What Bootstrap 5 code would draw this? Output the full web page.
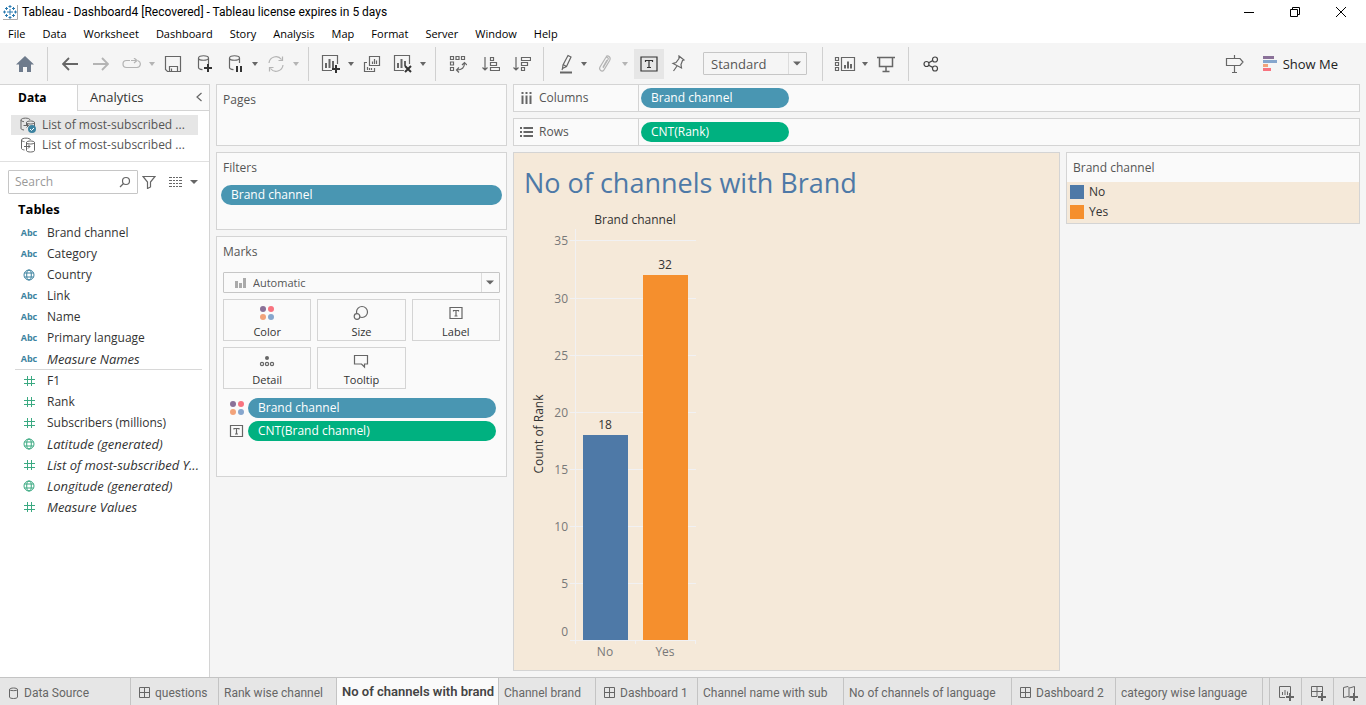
<!DOCTYPE html>
<html lang="en">
<head>
<meta charset="utf-8">
<meta name="viewport" content="width=device-width, initial-scale=1">
<title>Tableau - Dashboard4</title>
<link href="https://cdn.jsdelivr.net/npm/bootstrap@5.3.0/dist/css/bootstrap.min.css" rel="stylesheet">
<style>
:root{--line:#d4d4d4;--ink:#333;--soft:#555;--blue:#4996b2;--green:#00b180;--panel:#fafafa;--sand:#f5e9d9}
body{font-family:"Open Sans","Noto Sans",sans-serif;font-size:12px;line-height:20px;color:var(--ink);background:#f5f5f5}
button{font:inherit;color:inherit;background:none;border:0;padding:0}
svg{display:block;fill:none;stroke:#666;stroke-width:1.2;flex:none}
a{color:inherit;text-decoration:none}
.titlebar{height:24px;background:#fff;color:#000;font-family:Roboto,sans-serif;padding-left:2px;padding-right:2px}
.titlebar .winbtn svg{stroke:#000;stroke-width:1}
.titlebar .logo{stroke:#2a7ab0;stroke-width:1}
.winbtn{width:46px;height:24px;display:flex;align-items:center;justify-content:center}
.menubar{height:19px;background:#fff;color:#000;font-size:11px;padding-left:8px;gap:17px}
.menubar a{line-height:19px}
.toolbar{height:41px;padding-left:9px}
.tool{width:31px;height:30px;display:flex;align-items:center;justify-content:center;flex:none}
.tool-slim{width:27px}
.tool-on{width:30px;background:#e6e6e6}
.tool-guide{margin-left:auto;margin-right:12px}
.show-me{font-size:13px;color:#222}
.drop{width:10px;height:30px;display:flex;align-items:center;justify-content:center;flex:none}
.drop::after,.caret::after{content:"";border:3px solid transparent;border-top:4px solid #666;border-bottom:0}
.caret::after{border-width:4px 4px 0}
.off{opacity:.45}
.split{width:1px;height:34px;background:#d0d0d0;margin:0 6px 0 7px;flex:none}
.picker{appearance:none;border:1px solid #c6c6c6;border-radius:1px;color:var(--soft);outline-offset:1px;
 background:url("data:image/svg+xml,%3Csvg xmlns='http://www.w3.org/2000/svg' width='18' height='24'%3E%3Cpath d='M.5 0V24' stroke='%23dcdcdc'/%3E%3Cpath d='M5 10h8l-4 4z' fill='%23666'/%3E%3C/svg%3E") right center no-repeat}
.picker-fit{width:104px;height:23px;font-size:13px;line-height:20px;padding:0 7px;margin-left:12px;margin-right:8px}
.sidepane{width:210px;background:#fff;border-right:1px solid var(--line);border-top:1px solid var(--line);flex:none}
.side-tab{height:26px;font-size:13px;color:var(--ink)}
.side-tab.active{width:77px;padding-left:18px;text-align:left;font-weight:700;font-size:12px;color:#000}
.side-tab.other{padding:0 6px 2px 12px;background:var(--panel);border-left:1px solid var(--line);border-bottom:1px solid var(--line)}
.sources{padding:4px 11px 6px;border-bottom:1px solid #e0e0e0}
.source{height:20px;width:100%;padding-left:9px;gap:6px;color:var(--soft);white-space:nowrap}
.source.active{background:#e6e6e6}
.finder{padding:8px 12px 0 8px}
.finder-box{width:130px;height:24px;border:1px solid #c6c6c6;border-radius:1px;padding:0 6px}
.finder-box input{border:0;outline:0;min-width:0;padding:0;color:var(--ink);font-size:12px}
.finder-box input::placeholder{color:#999;opacity:1}
.finder-split{width:1px;height:18px;background:#d4d4d4;margin:0 4px 0 5px}
.side-title{font-size:13px;font-weight:700;color:#000;margin:5px 0 3px 18px;line-height:20px}
.fields{margin:0;padding:0 7px 0 15px;list-style:none}
.field{height:21px;display:flex;align-items:center;white-space:nowrap;width:100%}
.field .kind{width:28px;height:12px;margin-right:4px;display:flex;align-items:center;justify-content:center;font-size:9px;line-height:12px;font-weight:700;color:#3d83a0}
.fields svg{stroke:#3d83a0;stroke-width:1}
.measures{border-top:1px solid #d8d8d8;padding:0;margin:0 7px 0 15px}
.measures svg{stroke:#3aa981}
.calc{font-style:italic;font-size:13px}
.work{padding:0 6px 6px;gap:6px;min-width:0}
.shelves{width:291px;gap:6px;flex:none}
.stage{gap:6px;min-width:0}
.panel{background:var(--panel);border:1px solid var(--line)}
.panel-title{font-size:12px;line-height:20px;font-weight:400;margin:5px 6px 0;color:var(--soft)}
.pages{height:62px}.filters{height:78px}.marks{height:241px}
.pill{height:20px;border-radius:10px;padding:0 10px;text-align:left;color:#fff;font-weight:500;background:var(--blue);line-height:20px}
.pill-measure{background:var(--green)}
.pill-fixed{width:148px;margin:3px 2px}
.filters .pill{width:281px;margin:7px 4px}
.mark-type{width:100%;height:21px;font-size:11px;padding:0 29px}
.mark-wrap{margin:10px 6px 6px;position:relative}
.mark-wrap svg{position:absolute;left:12px;top:5px;stroke:none;fill:#aaa}
.mark-grid{display:grid;grid-template-columns:repeat(3,1fr);gap:6px;margin:0 6px}
.mark-btn{height:42px;border:1px solid var(--line);font-size:11px;line-height:16px;padding-top:5px;display:flex;flex-direction:column;align-items:center;gap:3px}
.encodings{margin:9px 10px 0 12px;gap:3px}
.encoding{gap:3px}
.shelf{height:28px}
.shelf-label{width:125px;padding-left:6px;gap:6px;border-right:1px solid var(--line);color:var(--soft)}
.view{background:var(--sand);border:1px solid var(--line);min-width:0}
.view h1{font-size:27px;line-height:36px;font-weight:400;color:#4e79a7;margin:12px 10px 0}
.view svg{stroke:none}
.view svg text{fill:#333;text-anchor:middle;font-size:12px}
.view svg .tick{fill:#787878}
.view svg .ends{text-anchor:end}
.view svg .head{font-weight:500}
.legend{width:294px;flex:none}
.legend ul{background:var(--sand);margin:0;padding:0 3px 1px;list-style:none}
.legend li{display:flex;align-items:center;gap:5px}
.swatch{width:14px;height:14px}
.swatch-no{background:#4e79a7}
.swatch-yes{background:#f58f2d}
.sheets{height:28px;border-top:1px solid #c4c4c4;background:#e6e6e6;color:#666;font-family:Roboto,sans-serif;
 display:grid;grid-template-columns:131px 88px 118px 162px 97px 102px 146px 168px 104px 147px minmax(6px,1fr) 32px 32px 32px}
.sheet{border-right:1px solid #c4c4c4;padding:2px 0 0 5px;display:flex;align-items:center;gap:5px;white-space:nowrap;overflow:hidden}
.sheet.active{background:var(--panel);font-size:13px;font-weight:600;color:#444;padding-top:0}
.sheet svg{stroke-width:1}
.sheet.iconic{padding-left:8px}
.sheet.adder{padding-left:7px}
</style>
</head>
<body>
<div class="d-flex flex-column min-vh-100">
<header>
 <div class="titlebar d-flex align-items-center">
  <svg class="logo" width="16" height="16"><path d="M8 5v6M5 8h6M8 1v3M6.500 2.500h3M8 12v3M6.500 13.500h3M1 8h3M2.500 6.500v3M12 8h3M13.500 6.500v3M4.500 3v3M3 4.500h3M11.500 3v3M10 4.500h3M4.500 10v3M3 11.500h3M11.500 10v3M10 11.500h3"/><path d="M15.500 1v14.500H1" stroke="#aaa"/></svg>
  <span class="ms-1">Tableau - Dashboard4 [Recovered] - Tableau license expires in 5 days</span>
  <div class="ms-auto d-flex">
   <button class="winbtn" aria-label="Minimize"><svg width="12" height="12"><path d="M1 6.500h10"/></svg></button>
   <button class="winbtn" aria-label="Restore"><svg width="12" height="12"><path d="M1.500 3.500h7v7h-7zM3.500 3V1.500h7v7H9"/></svg></button>
   <button class="winbtn" aria-label="Close"><svg width="12" height="12"><path d="M1 1l10 10M11 1L1 11"/></svg></button>
  </div>
 </div>
 <nav class="menubar d-flex"><a href="#">File</a><a href="#">Data</a><a href="#">Worksheet</a><a href="#">Dashboard</a><a href="#">Story</a><a href="#">Analysis</a><a href="#">Map</a><a href="#">Format</a><a href="#">Server</a><a href="#">Window</a><a href="#">Help</a></nav>
 <div class="toolbar d-flex align-items-center" role="toolbar" aria-label="Main">
  <button class="tool" aria-label="Start page"><svg width="18" height="16"><path d="M9 0l9 8.500h-3V16h-4v-5H7v5H3V8.500H0z" fill="#6e7b8c" stroke="none"/></svg></button>
  <span class="split"></span>
  <button class="tool" aria-label="Undo"><svg width="16" height="14"><path d="M16 7H1M7 1L1 7l6 6" stroke-width="1.800"/></svg></button>
  <button class="tool off" aria-label="Redo"><svg width="16" height="14"><path d="M0 7h15M9 1l6 6-6 6" stroke-width="1.800"/></svg></button>
  <button class="tool off" aria-label="Replay"><svg width="20" height="12"><path d="M8 2.500H4.500a3.500 3.500 0 000 7H15a3.500 3.500 0 001-6.800M9 2.500h5M12 0l3 2.500L12 5"/></svg></button><button class="drop off" aria-label="Replay options"></button>
  <button class="tool" aria-label="Save"><svg width="18" height="18"><path d="M1.500 1.500h15v15h-13l-2-2zM5.500 16v-4.500h8V16M7.500 13.500v3"/></svg></button>
  <button class="tool" aria-label="New data source"><svg width="18" height="20"><path d="M3.500 4c0-3 10-3 10 0s-10 3-10 0v9.500c0 1.500 2 2 4 2.200M13.500 4v6"/><path d="M13 10v8M9 14h8" stroke="#333" stroke-width="2"/></svg></button>
  <button class="tool" aria-label="Pause updates"><svg width="18" height="20"><path d="M3.500 4c0-3 10-3 10 0s-10 3-10 0v9.500c0 1.500 2 2 4 2.200M13.500 4v5"/><path d="M11 12v6M15 12v6" stroke="#333" stroke-width="2"/></svg></button><button class="drop" aria-label="Update options"></button>
  <button class="tool off" aria-label="Refresh"><svg width="18" height="18"><path d="M2 8a7 7 0 0112.500-3.500M16 10A7 7 0 013.500 13.500M11.500 5.500h4v-4M6.500 12.500h-4v4"/></svg></button><button class="drop off" aria-label="Refresh options"></button>
  <span class="split"></span>
  <button class="tool" aria-label="New worksheet"><svg width="20" height="20"><path d="M11 16.500H1.500v-15h15V10"/><path d="M5 14V9M8.500 14V5M12 14V7" stroke-width="2"/><path d="M15 11v8M11 15h8" stroke="#333" stroke-width="2"/></svg></button><button class="drop" aria-label="New options"></button>
  <button class="tool" aria-label="Duplicate"><svg width="18" height="18"><path d="M6.500 1.500h10v9h-10zM4 7.500H1.500v9h10V13M9.500 9V6.500M11.500 9V4M13.500 9V5.500M4.500 15v-3M6.500 15v-2M8.500 15v-2"/></svg></button>
  <button class="tool" aria-label="Clear sheet"><svg width="20" height="20"><path d="M11 16.500H1.500v-15h15V10"/><path d="M5 14V9M8.500 14V5M12 12V7" stroke-width="2"/><path d="M12 12l6 6M18 12l-6 6" stroke="#333" stroke-width="2"/></svg></button><button class="drop" aria-label="Clear options"></button>
  <span class="split"></span>
  <div class="d-flex gap-1">
  <button class="tool" aria-label="Swap rows and columns"><svg width="18" height="18"><path d="M1.500 1.500h3v3h-3zM7 1.500h3v3H7zM12.500 1.500h3v3h-3zM1.500 7h3v3h-3zM1.500 12.500h3v3h-3zM8 15c5 0 7.500-2 7.500-7M10 12.500L7.500 15l2.500 2.500M13 10l2.500-2.500L18 10"/></svg></button>
  <button class="tool tool-slim" aria-label="Sort ascending"><svg width="18" height="16"><path d="M3 1v12M.5 11.500L3 14l2.500-2.500M8.500 1.500h3v3h-3zM8.500 6.500h6v3h-6zM8.500 11.500h9v3h-9z"/></svg></button>
  <button class="tool tool-slim" aria-label="Sort descending"><svg width="18" height="16"><path d="M3 1v12M.5 11.500L3 14l2.500-2.500M8.500 1.500h9v3h-9zM8.500 6.500h6v3h-6zM8.500 11.500h3v3h-3z"/></svg></button>
  </div>
  <span class="split ms-2 me-2"></span>
  <button class="tool tool-slim" aria-label="Highlight"><svg width="14" height="20"><path d="M1 18.500h12" stroke-width="2"/><path d="M9 1.500l3 1.500-4.500 9.500L3.500 14.500 4 11zM4 10.500l3.500 2M4 13l-1 3"/></svg></button><button class="drop" aria-label="Highlight options"></button>
  <button class="tool off" aria-label="Group members"><svg width="14" height="18"><path d="M5 13l5-8.500c1-2-1.500-3-2.500-1.500L2 12c-1.500 3 2 5.500 4 2.800l5.500-9C13.500 2 10 0 8 1.500M9 5l-4 7"/></svg></button><button class="drop off" aria-label="Group options"></button>
  <button class="tool tool-on ms-1" aria-label="Show mark labels" aria-pressed="true"><svg width="18" height="16"><path d="M1 1h16v14H1z" stroke="#333"/><path d="M5.500 6V4.500h7V6M9 4.500v7M7 11.500h4" stroke="#333"/></svg></button>
  <button class="tool tool-slim" aria-label="Fix axes"><svg width="14" height="17"><path d="M8 1l5 4-1.500.5L10 9.500l.5 3.500L2 8.500 5 7.500l3-4zM6 11l-3.500 5"/></svg></button>
  <select class="picker picker-fit" aria-label="Fit"><option>Standard</option></select>
  <span class="split"></span>
  <button class="tool" aria-label="Show cards"><svg width="22" height="18"><path d="M1.500 2.500h3v3h-3zM1.500 7.500h3v3h-3zM1.500 12.500h3v3h-3zM7.500 2.500h13v13h-13z"/><path d="M11 13.500V10M14 13.500v-7M17 13.500V9" stroke-width="2"/></svg></button><button class="drop" aria-label="Card options"></button>
  <button class="tool" aria-label="Presentation mode"><svg width="18" height="18"><path d="M0 2.500h18M2.500 3v8.500h13V3M9 12v4.500M5.500 16.500h7" stroke-width="1.500"/></svg></button>
  <span class="split"></span>
  <button class="tool" aria-label="Share"><svg width="16" height="16"><circle cx="3.500" cy="8" r="2.500" stroke="#444"/><circle cx="12" cy="3.500" r="2.500" stroke="#444"/><circle cx="12" cy="12.500" r="2.500" stroke="#444"/><path d="M5.700 6.800l4-2.200M5.700 9.200l4 2.200" stroke="#444"/></svg></button>
  <button class="tool tool-guide" aria-label="Guide"><svg width="20" height="18"><path d="M1.500 3.500H15l3 3.500-3 3.500H1.500zM9.500 0v3M9.500 11v6.500M7 17.500h5"/></svg></button>
  <button class="show-me d-flex align-items-center gap-1 me-4 pe-1"><svg width="16" height="16"><path d="M0 1.500h11" stroke="#8a7198" stroke-width="3"/><path d="M0 5.500h14" stroke="#86a6cd" stroke-width="3"/><path d="M0 9.500h5" stroke="#f2a37a" stroke-width="3"/><path d="M0 13.500h8" stroke="#f8737f" stroke-width="3"/></svg>Show Me</button>
 </div>
</header>

<main class="d-flex flex-grow-1">
 <aside class="sidepane">
  <div class="d-flex"><button class="side-tab active">Data</button><button class="side-tab other d-flex flex-grow-1 align-items-center justify-content-between">Analytics<svg width="8" height="10"><path d="M6.500 1L2 5l4.500 4"/></svg></button></div>
  <div class="sources">
   <button class="source active d-flex align-items-center"><svg width="16" height="16"><path d="M1 3c0-2.500 9-2.500 9 0M1 3c0 1 1.500 1.500 3 1.700M1 3v8.500c0 .8 1.500 1.300 3 1.500M6.500 5.500c0-2 8-2 8 0s-8 2-8 0v3M14.500 5.500v4M3.500 8.500h5M6.500 6.500l2 2-2 2" stroke-width="1"/><circle cx="12" cy="12" r="4" fill="#3d83a0" stroke="none"/><path d="M10 12l1.500 1.500L14 11" stroke="#fff" stroke-width="1"/></svg>List of most-subscribed ...</button>
   <button class="source d-flex align-items-center"><svg width="16" height="16"><path d="M1.500 3c0-2.500 9-2.500 9 0M1.500 3c0 1 1.500 1.500 3 1.700M1.500 3v8.500c0 .8 1.500 1.300 3 1.500M6.500 5.500c0-2 8-2 8 0s-8 2-8 0v8c0 2 8 2 8 0v-8M4 9.500h6M8 7.500l2 2-2 2" stroke-width="1"/></svg>List of most-subscribed ...</button>
  </div>
  <div class="finder d-flex align-items-center">
   <label class="finder-box d-flex align-items-center"><input class="flex-grow-1" type="text" placeholder="Search" aria-label="Search"><svg width="12" height="12"><circle cx="7" cy="5" r="3.500"/><path d="M4.500 7.500L1 11"/></svg></label>
   <button class="ms-1" aria-label="Filter"><svg width="14" height="14"><path d="M1 1.500h12L8.500 7v5l-3 1.500V7z"/></svg></button>
   <span class="finder-split"></span>
   <button class="ms-1 me-1" aria-label="View as list"><svg width="13" height="12"><path d="M0 1.500h13M0 4.500h13M0 7.500h13M0 10.500h13" stroke-dasharray="3 1 2 1 2 1 3"/></svg></button>
   <button class="caret d-flex ms-1" aria-label="List options"></button>
  </div>
  <h2 class="side-title">Tables</h2>
  <ul class="fields">
   <li class="field"><span class="kind">Abc</span>Brand channel</li>
   <li class="field"><span class="kind">Abc</span>Category</li>
   <li class="field"><span class="kind"><svg width="12" height="12"><use href="#globe"/></svg></span>Country</li>
   <li class="field"><span class="kind">Abc</span>Link</li>
   <li class="field"><span class="kind">Abc</span>Name</li>
   <li class="field"><span class="kind">Abc</span>Primary language</li>
   <li class="field calc"><span class="kind fst-normal">Abc</span>Measure Names</li>
  </ul>
  <ul class="fields measures">
   <li class="field"><span class="kind"><svg width="12" height="12"><use href="#hash"/></svg></span>F1</li>
   <li class="field"><span class="kind"><svg width="12" height="12"><use href="#hash"/></svg></span>Rank</li>
   <li class="field"><span class="kind"><svg width="12" height="12"><use href="#hash"/></svg></span>Subscribers (millions)</li>
   <li class="field calc"><span class="kind"><svg width="12" height="12"><use href="#globe"/></svg></span>Latitude (generated)</li>
   <li class="field calc"><span class="kind"><svg width="12" height="12"><use href="#hash"/></svg></span>List of most-subscribed Y...</li>
   <li class="field calc"><span class="kind"><svg width="12" height="12"><use href="#globe"/></svg></span>Longitude (generated)</li>
   <li class="field calc"><span class="kind"><svg width="12" height="12"><use href="#hash"/></svg></span>Measure Values</li>
  </ul>
  <svg class="d-none"><symbol id="hash" viewBox="0 0 12 12"><path d="M4.500 1v10M8.500 1v10M1 4.500h11M1 8.500h11" stroke-width="1"/></symbol><symbol id="globe" viewBox="0 0 12 12"><circle cx="6" cy="6" r="5"/><ellipse cx="6" cy="6" rx="2.300" ry="5"/><path d="M1.500 4h9M1.500 8h9"/></symbol></svg>
 </aside>

 <div class="work d-flex flex-grow-1">
  <div class="shelves d-flex flex-column">
   <section class="panel pages"><h2 class="panel-title">Pages</h2></section>
   <section class="panel filters"><h2 class="panel-title">Filters</h2><button class="pill">Brand channel</button></section>
   <section class="panel marks"><h2 class="panel-title">Marks</h2>
    <div class="mark-wrap"><svg width="12" height="11"><path d="M0 4h3v7H0zM4 6h3v5H4zM8 1h3v10H8z"/></svg><select class="picker mark-type d-block" aria-label="Mark type"><option>Automatic</option></select></div>
    <div class="mark-grid">
     <button class="mark-btn"><svg width="16" height="16"><g id="dots" stroke="none"><circle cx="4" cy="4" r="3" fill="#8a7198"/><circle cx="12" cy="4" r="3" fill="#f8737f"/><circle cx="4" cy="12" r="3" fill="#f2a37a"/><circle cx="12" cy="12" r="3" fill="#86a6cd"/></g></svg>Color</button>
     <button class="mark-btn"><svg width="16" height="16"><circle cx="9" cy="7" r="5.500"/><circle cx="4" cy="11.500" r="2.800" fill="#fafafa"/></svg>Size</button>
     <button class="mark-btn"><svg width="16" height="16"><path d="M2 2.500h12v11H2zM5.500 6.500V5.500h5v1M8 5.500v5.500M6.500 11h3"/></svg>Label</button>
     <button class="mark-btn"><svg width="16" height="16"><circle cx="8" cy="5" r="2" fill="#666" stroke="none"/><circle cx="3" cy="11" r="1.600"/><circle cx="8" cy="11" r="1.600"/><circle cx="13" cy="11" r="1.600"/></svg>Detail</button>
     <button class="mark-btn"><svg width="16" height="16"><path d="M1.500 2.500h13v8.500h-3v3l-3-3h-7z"/></svg>Tooltip</button>
    </div>
    <div class="encodings d-flex flex-column">
     <div class="encoding d-flex align-items-center"><svg width="16" height="16"><use href="#dots"/></svg><button class="pill flex-grow-1">Brand channel</button></div>
     <div class="encoding d-flex align-items-center"><svg width="16" height="16"><path d="M1.500 2.500h12v11h-12zM5 6.500V5.500h5v1M7.500 5.500v5.500M6 11h3"/></svg><button class="pill pill-measure flex-grow-1">CNT(Brand channel)</button></div>
    </div>
   </section>
  </div>

  <div class="stage d-flex flex-column flex-grow-1">
   <section class="panel shelf d-flex"><div class="shelf-label d-flex align-items-center"><svg width="13" height="13"><path d="M1.500 1h2M5.500 1h2M9.500 1h2M2.500 3.500V12M6.500 3.500V12M10.500 3.500V12" stroke-width="2"/></svg>Columns</div><button class="pill pill-fixed">Brand channel</button></section>
   <section class="panel shelf d-flex"><div class="shelf-label d-flex align-items-center"><svg width="13" height="13"><path d="M0 2h2M0 6h2M0 10h2M3.500 2H13M3.500 6H13M3.500 10H13" stroke-width="2"/></svg>Rows</div><button class="pill pill-measure pill-fixed">CNT(Rank)</button></section>
   <div class="stage d-flex flex-grow-1">
    <section class="view flex-grow-1">
     <h1>No of channels with Brand</h1>
     <svg width="200" height="464" role="img" aria-label="Count of Rank by Brand channel">
      <g shape-rendering="crispEdges">
       <path stroke="#f1f1f3" stroke-width="1" d="M56 39.500h126M56 97.500h126M56 154.500h126M56 211.500h126M56 268.500h126M56 325.500h126M56 382.500h126M56 439.500h126M61.500 28v415M121.500 439v4M181.500 439v4"/>
       <rect x="69" y="234" width="45" height="205" fill="#4e79a7"/>
       <rect x="129" y="74" width="45" height="365" fill="#f58f2d"/>
      </g>
      <text class="head" x="121" y="23">Brand channel</text>
      <text class="head" transform="translate(29 233) rotate(-90)">Count of Rank</text>
      <text x="91" y="228">18</text><text x="151" y="68">32</text>
      <g><text class="tick ends" x="54" y="44">35</text><text class="tick ends" x="54" y="102">30</text><text class="tick ends" x="54" y="159">25</text><text class="tick ends" x="54" y="216">20</text><text class="tick ends" x="54" y="273">15</text><text class="tick ends" x="54" y="330">10</text><text class="tick ends" x="54" y="387">5</text><text class="tick ends" x="54" y="435">0</text></g>
      <text class="tick" x="91" y="455">No</text><text class="tick" x="151" y="455">Yes</text>
     </svg>
    </section>
    <section class="panel legend align-self-start"><h2 class="panel-title mb-1">Brand channel</h2>
     <ul><li><span class="swatch swatch-no"></span>No</li><li><span class="swatch swatch-yes"></span>Yes</li></ul>
    </section>
   </div>
  </div>
 </div>
</main>

<nav class="sheets" aria-label="Sheets">
 <a href="#" class="sheet iconic"><svg width="11" height="12"><path d="M1.500 2.500c0-2 8-2 8 0v7.500c0 2-8 2-8 0zM1.500 2.500c0 1.500 8 1.500 8 0"/></svg>Data Source</a>
 <a href="#" class="sheet iconic"><svg width="11" height="12"><path id="win" d="M.5 .5h10v10H.5zM5.500 .5v10M.5 5.500h10"/></svg>questions</a>
 <a href="#" class="sheet">Rank wise channel</a>
 <a href="#" class="sheet active" aria-current="page">No of channels with brand</a>
 <a href="#" class="sheet">Channel brand</a>
 <a href="#" class="sheet iconic"><svg width="11" height="12"><use href="#win"/></svg>Dashboard 1</a>
 <a href="#" class="sheet">Channel name with sub</a>
 <a href="#" class="sheet">No of channels of language</a>
 <a href="#" class="sheet iconic"><svg width="11" height="12"><use href="#win"/></svg>Dashboard 2</a>
 <a href="#" class="sheet">category wise language</a>
 <span class="sheet"></span>
 <button class="sheet adder" aria-label="New worksheet"><svg width="18" height="16"><path d="M8 12.500H2.500v-11h11V8M5.500 10V7M8 10V5M10.500 10V6.500"/><path d="M13 8v8M9 12h8" stroke-width="2"/></svg></button>
 <button class="sheet adder" aria-label="New dashboard"><svg width="18" height="16"><path d="M8 11.500H2.500v-10h11V8M8 1.500v10M2.500 6.500h11"/><path d="M13 8v8M9 12h8" stroke-width="2"/></svg></button>
 <button class="sheet adder border-end-0" aria-label="New story"><svg width="18" height="16"><path d="M9 12.500l-2-1-4.500 1v-10l4.500-1 1.500 1.500L13.500 1.500V8M8 3v9"/><path d="M13 8v8M9 12h8" stroke-width="2"/></svg></button>
</nav>
</div>
<script src="https://cdn.jsdelivr.net/npm/bootstrap@5.3.0/dist/js/bootstrap.bundle.min.js"></script>
</body>
</html>
